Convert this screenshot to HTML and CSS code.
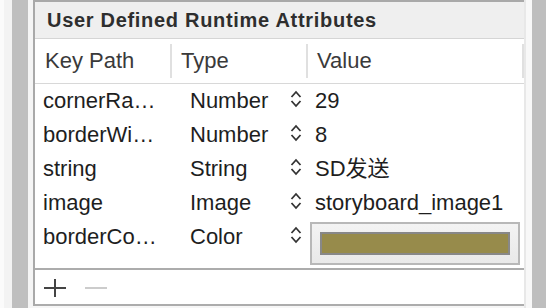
FILE: index.html
```html
<!DOCTYPE html>
<html>
<head>
    <meta charset="UTF-8">
    <title>User Defined Runtime Attributes</title>
    <link rel="stylesheet" href="styles.css">
</head>
<body>
    <div class="edge-light"></div>
    <div class="edge-gutter"></div>
    <div class="scroller"></div>
    <div class="edge-gap"></div>

    <div class="panel">
        <div class="panel-title">User Defined Runtime Attributes</div>

        <div class="col-head">
            <div class="col col-key">Key Path</div>
            <div class="col-divider"></div>
            <div class="col col-type">Type</div>
            <div class="col-divider"></div>
            <div class="col col-value">Value</div>
            <div class="col-divider"></div>
        </div>

        <div class="rows">
            <div class="row">
                <div class="cell-key">cornerRa…</div>
                <div class="cell-type">Number</div>
                <svg class="stepper" width="12" height="20" viewBox="0 0 12 20"><path d="M1.5 8 L6 3 L10.5 8 M1.5 12 L6 17 L10.5 12"/></svg>
                <div class="cell-value">29</div>
            </div>
            <div class="row">
                <div class="cell-key">borderWi…</div>
                <div class="cell-type">Number</div>
                <svg class="stepper" width="12" height="20" viewBox="0 0 12 20"><path d="M1.5 8 L6 3 L10.5 8 M1.5 12 L6 17 L10.5 12"/></svg>
                <div class="cell-value">8</div>
            </div>
            <div class="row">
                <div class="cell-key">string</div>
                <div class="cell-type">String</div>
                <svg class="stepper" width="12" height="20" viewBox="0 0 12 20"><path d="M1.5 8 L6 3 L10.5 8 M1.5 12 L6 17 L10.5 12"/></svg>
                <div class="cell-value">SD发送</div>
            </div>
            <div class="row">
                <div class="cell-key">image</div>
                <div class="cell-type">Image</div>
                <svg class="stepper" width="12" height="20" viewBox="0 0 12 20"><path d="M1.5 8 L6 3 L10.5 8 M1.5 12 L6 17 L10.5 12"/></svg>
                <div class="cell-value">storyboard_image1</div>
            </div>
            <div class="row row-color">
                <div class="cell-key">borderCo…</div>
                <div class="cell-type">Color</div>
                <svg class="stepper" width="12" height="20" viewBox="0 0 12 20"><path d="M1.5 8 L6 3 L10.5 8 M1.5 12 L6 17 L10.5 12"/></svg>
                <div class="color-well"><div class="swatch"></div></div>
            </div>
        </div>

        <div class="toolbar">
            <svg class="tool" width="24" height="20" viewBox="0 0 24 20"><path class="plus" d="M1 10 H23 M12 1 V19"/></svg>
            <svg class="tool" width="24" height="20" viewBox="0 0 24 20"><path class="minus" d="M1 10 H23"/></svg>
        </div>
    </div>

    <div class="edge-right-line"></div>
    <div class="edge-right-gap"></div>
    <div class="scroller scroller-right"></div>
</body>
</html>
```

FILE: styles.css
```css
* {
    box-sizing: border-box;
    margin: 0;
    padding: 0;
}

body {
    display: flex;
    height: 308px;
    background: #f6f6f6;
    font-family: "Liberation Sans", Arial, "Noto Sans CJK SC", sans-serif;
    color: #1e1e1e;
    overflow: hidden;
}

.edge-light {
    width: 4px;
    background: #fbfbfb;
}

.edge-gutter {
    width: 8px;
    background: #f3f3f3;
}

.scroller {
    width: 16px;
    background: #bfbfbf;
}

.edge-gap {
    width: 5px;
    background: #f5f5f5;
}

.panel {
    width: 491px;
    height: 306px;
    border-left: 2px solid #a9a9a9;
    border-top: 2px solid #a9a9a9;
    background: white;
    display: flex;
    flex-direction: column;
}

.panel-title {
    height: 37px;
    padding: 1px 0 0 12px;
    line-height: 35px;
    font-size: 20px;
    font-weight: bold;
    letter-spacing: 0.7px;
    color: #2e2e2e;
    background: #efefef;
    border-bottom: 1px solid #d5d5d5;
}

/* column headers */
.col-head {
    display: flex;
    align-items: center;
    height: 45px;
    border-bottom: 1px solid #d8d8d8;
    font-size: 22px;
    color: #3a3a3a;
}

.col {
    line-height: 44px;
}

.col-key {
    width: 135px;
    padding-left: 10px;
}

.col-type {
    width: 134px;
    padding-left: 9px;
}

.col-value {
    width: 214px;
    padding-left: 9px;
}

.col-divider {
    width: 2px;
    height: 34px;
    background: #e0e0e0;
}

/* rows */
.row {
    display: flex;
    align-items: flex-start;
    height: 34px;
    padding-left: 8px;
    font-size: 22px;
    line-height: 34px;
}

.row-color {
    height: 48px;
}

.cell-key {
    width: 147px;
    white-space: nowrap;
}

.cell-type {
    width: 100px;
}

.stepper {
    margin-top: 5px;
    margin-right: 13px;
    flex-shrink: 0;
}

.stepper path {
    fill: none;
    stroke: #333333;
    stroke-width: 1.8;
}

.cell-value {
    white-space: nowrap;
}

.color-well {
    margin: 2px 0 0 -5px;
    width: 210px;
    height: 43px;
    padding: 8px;
    border: 2px solid #b8b8b8;
    background: linear-gradient(#f3f3f3, #e9e9e9);
}

.swatch {
    height: 100%;
    border: 2px solid #888888;
    background: #978b4b;
}

/* add / remove bar */
.toolbar {
    display: flex;
    align-items: center;
    gap: 17px;
    height: 38px;
    padding: 2px 0 0 8px;
    border-top: 2px solid #acacac;
    border-bottom: 2px solid #acacac;
}

.tool path {
    fill: none;
    stroke-width: 2;
}

.plus {
    stroke: #444444;
}

.minus {
    stroke: #cccccc;
}

.edge-right-line {
    width: 2px;
    background: #e8e8e8;
}

.edge-right-gap {
    width: 6px;
    background: #f8f8f8;
}

.scroller-right {
    width: 14px;
    background: #bebebe;
}
```
